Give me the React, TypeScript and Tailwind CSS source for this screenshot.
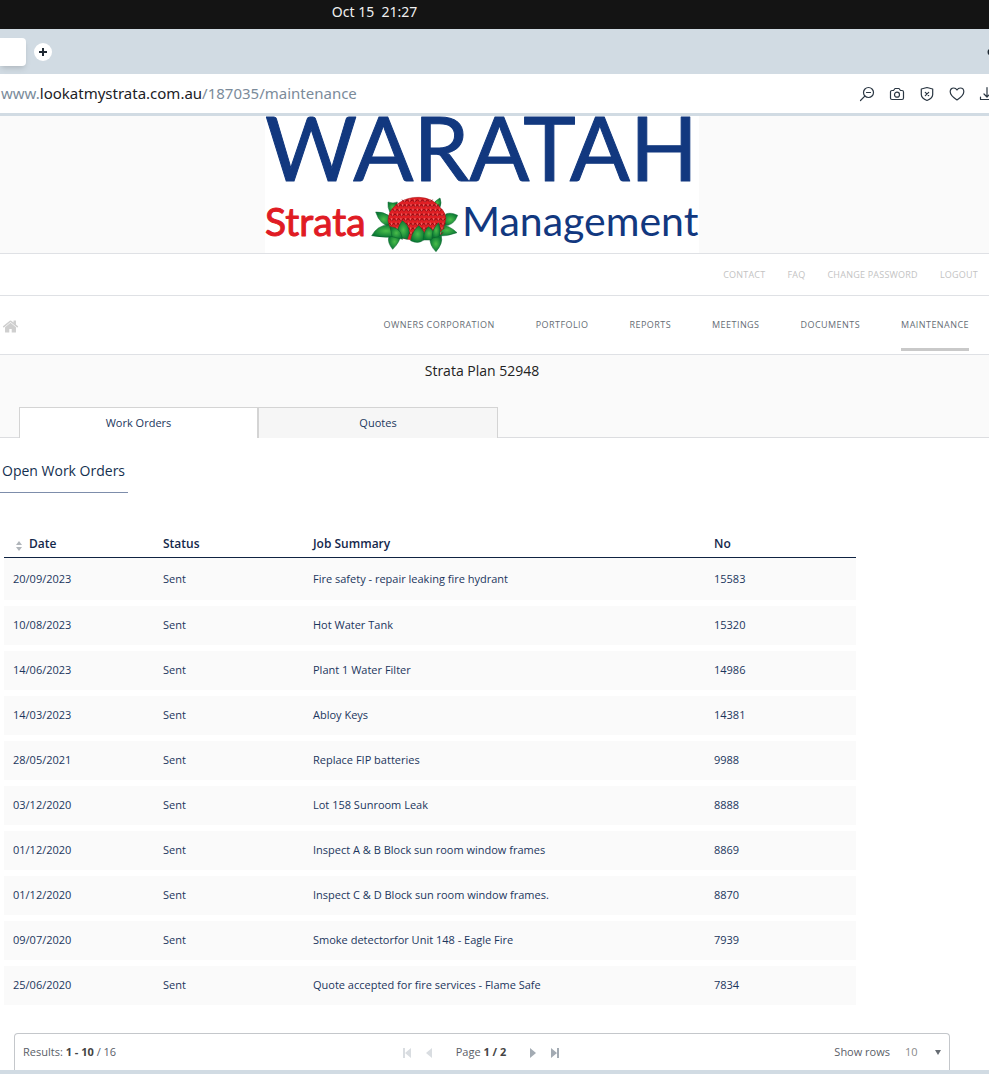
import { useState, type ReactNode } from 'react';

type WorkOrder = {
  date: string;
  status: string;
  summary: string;
  no: string;
};

const WORK_ORDERS: WorkOrder[] = [
  { date: '20/09/2023', status: 'Sent', summary: 'Fire safety - repair leaking fire hydrant', no: '15583' },
  { date: '10/08/2023', status: 'Sent', summary: 'Hot Water Tank', no: '15320' },
  { date: '14/06/2023', status: 'Sent', summary: 'Plant 1 Water Filter', no: '14986' },
  { date: '14/03/2023', status: 'Sent', summary: 'Abloy Keys', no: '14381' },
  { date: '28/05/2021', status: 'Sent', summary: 'Replace FIP batteries', no: '9988' },
  { date: '03/12/2020', status: 'Sent', summary: 'Lot 158 Sunroom Leak', no: '8888' },
  { date: '01/12/2020', status: 'Sent', summary: 'Inspect A & B Block sun room window frames', no: '8869' },
  { date: '01/12/2020', status: 'Sent', summary: 'Inspect C & D Block sun room window frames.', no: '8870' },
  { date: '09/07/2020', status: 'Sent', summary: 'Smoke detectorfor Unit 148 - Eagle Fire', no: '7939' },
  { date: '25/06/2020', status: 'Sent', summary: 'Quote accepted for fire services - Flame Safe', no: '7834' },
];

const ACCOUNT_LINKS = ['CONTACT', 'FAQ', 'CHANGE PASSWORD', 'LOGOUT'];
const MAIN_LINKS = ['OWNERS CORPORATION', 'PORTFOLIO', 'REPORTS', 'MEETINGS', 'DOCUMENTS', 'MAINTENANCE'];
const TABS = ['Work Orders', 'Quotes'];

const LEAVES = [
  'M84 36 Q100 42 112 36 L108 60 L90 68 Q82 52 84 36Z',
  'M240 24 Q246 38 240 52 L220 42 Q228 30 240 24Z',
  'M47 66 Q70 64 88 78 Q100 92 92 110 Q60 106 47 66Z',
  'M293 76 Q272 66 258 72 Q246 88 250 108 Q282 108 293 76Z',
  'M35 137 Q52 106 86 104 Q112 112 122 138 Q80 146 35 137Z',
  'M291 128 Q268 106 242 104 Q228 118 232 138 Q262 140 291 128Z',
  'M98 178 Q82 158 86 142 L122 132 Q122 154 98 178Z',
  'M228 185 Q208 166 210 142 L244 138 Q250 160 228 185Z',
];

const CROWN = [
  'M127 92 Q146 104 148 128 L142 148 L112 140 Q110 112 127 92Z',
  'M90 110 Q112 112 122 128 L128 148 L96 140Z',
  'M176 107 Q196 122 194 148 Q176 164 152 152 Q156 124 176 107Z',
  'M205 110 Q222 120 224 138 L212 150 L190 150 Q190 124 205 110Z',
  'M236 98 Q244 118 238 140 L216 144 Q216 116 236 98Z',
];

// rows of petals that follow the dome of the flower
const PETALS = Array.from({ length: 8 }, (_, row) => {
  const y = 34 + row * 14;
  const half = 84 * Math.sqrt(Math.max(0, 1 - ((y - 98) / 76) ** 2));
  const count = Math.max(4, Math.round(half / 7)) + (row % 2);
  return Array.from({ length: count }, (_, i) => ({
    x: Math.round(172 - half + ((i + 0.5) * 2 * half) / count),
    y,
  }));
}).flat();

function Logo() {
  return (
    <svg viewBox="0 0 434 137" className="w-[434px] h-[137px] bg-white overflow-visible" role="img" aria-label="Waratah Strata Management">
      <defs>
        <radialGradient id="leaf">
          <stop offset="0" stopColor="#4bbd4a" />
          <stop offset="1" stopColor="#0b7a35" />
        </radialGradient>
      </defs>
      <g strokeLinejoin="round" className="font-['Lato',sans-serif]">
        <text x="0" y="65" fontSize="89" fill="#12387f" stroke="#12387f" strokeWidth="1">WARATAH</text>
        <text x="0" y="120" fontSize="39" fill="#e01b24" stroke="#e01b24" strokeWidth="1">Strata</text>
        <text x="197" y="120" fontSize="41" fill="#12387f">Management</text>
      </g>
      <g transform="translate(95 74) scale(0.3333)" stroke="#07602a" strokeWidth="1.5">
        {LEAVES.map(d => <path key={d} d={d} fill="url(#leaf)" />)}
        <path d="M84 92 Q84 62 112 42 Q142 20 178 22 Q218 24 240 52 Q262 72 256 94 Q248 140 200 148 Q150 156 112 138 Q88 118 84 92Z" fill="#e01f24" stroke="#9b1015" />
        {PETALS.map(p => (
          <g key={`${p.x}-${p.y}`} fill="none" strokeLinecap="round">
            <path d={`M${p.x - 7} ${p.y - 4} q7 11 14 0`} stroke="#8d0d14" strokeWidth="3" />
            <path d={`M${p.x} ${p.y - 5} v5`} stroke="#f07878" strokeWidth="2.5" />
          </g>
        ))}
        {CROWN.map(d => <path key={d} d={d} fill="url(#leaf)" />)}
      </g>
    </svg>
  );
}

function ToolButton({ label, children }: { label: string; children: ReactNode }) {
  return (
    <button aria-label={label} className="w-[30px] h-[30px] flex items-center justify-center">
      <svg viewBox="0 0 16 16" className="w-4 h-4" fill="none" stroke="#2b3743" strokeWidth="1.2" strokeLinecap="round" strokeLinejoin="round">
        {children}
      </svg>
    </button>
  );
}

function PagerButton({ label, disabled, children }: { label: string; disabled?: boolean; children: ReactNode }) {
  return (
    <button aria-label={label} disabled={disabled} className="w-[22px] h-5 flex items-center justify-center text-[#a3abb3] disabled:text-[#d9dde1]">
      <svg viewBox="0 0 10 10" className="w-[10px] h-[10px]" fill="currentColor">{children}</svg>
    </button>
  );
}

export default function App() {
  const [tab, setTab] = useState('Work Orders');
  const [rows, setRows] = useState('10');

  return (
    <div className="font-['Open_Sans',sans-serif] bg-white text-[#1b365d] overflow-hidden">
      {/* Desktop bar */}
      <div className="h-[29px] bg-[#141414] text-[#f0f0f0] font-['Noto_Sans',sans-serif] text-sm leading-6 text-center pr-[240px] whitespace-pre">
        Oct 15  21:27
      </div>

      {/* Browser tabs */}
      <div className="h-[45px] bg-[#d1dbe3] flex items-center justify-between">
        <div className="flex items-center gap-2">
          <div className="w-[26px] h-7 bg-white rounded-r shadow-md" />
          <button aria-label="New tab" className="w-[18px] h-[18px] rounded-full bg-white flex items-center justify-center">
            <svg viewBox="0 0 8 8" className="w-2 h-2" stroke="#1f2933" strokeWidth="2"><path d="M4 0v8M0 4h8" /></svg>
          </button>
        </div>
        <svg viewBox="0 0 2 8" className="w-[2px] h-2"><circle cx="4" cy="4" r="3.5" fill="#1f2933" /></svg>
      </div>

      {/* Address bar */}
      <div className="h-[42px] border-b-[3px] border-[#d1dbe3] flex items-center justify-between">
        <div className="font-['Noto_Sans',sans-serif] text-[15px] text-[#7b8b9a] pl-px">
          www.<span className="text-[#1c2126]">lookatmystrata.com.au</span>/187035/maintenance
        </div>
        <div className="flex -mr-[13px]">
          <ToolButton label="Zoom out">
            <circle cx="9.5" cy="6.5" r="5" />
            <path d="M5.8 10.2L1.5 14.5M7.5 6.5h4" />
          </ToolButton>
          <ToolButton label="Snapshot">
            <path d="M1.5 6a1.5 1.5 0 0 1 1.500-1.500H4.500L6 2.500h4l1.500 2H13A1.500 1.500 0 0 1 14.500 6v6a1.500 1.500 0 0 1-1.500 1.500H3A1.500 1.500 0 0 1 1.500 12z" />
            <circle cx="8" cy="8.700" r="2.500" />
          </ToolButton>
          <ToolButton label="Blocker">
            <path d="M8 1.500L13.700 3v5.500c0 2.500-2.500 4.700-5.700 6-3.200-1.300-5.700-3.500-5.700-6V3z" />
            <path d="M6.300 6.300l3.400 3.400M9.700 6.300L6.300 9.700" />
          </ToolButton>
          <ToolButton label="Favourite">
            <path d="M8 14C4 11.300 1.200 8.800 1.200 5.700 1.200 3.600 2.700 2 4.700 2 6.200 2 7.300 2.800 8 4c.7-1.200 1.800-2 3.300-2 2 0 3.500 1.600 3.500 3.700C14.800 8.800 12 11.300 8 14z" />
          </ToolButton>
          <ToolButton label="Downloads">
            <path d="M8 1.500v9M5 8l3 3 3-3M1.500 11v2.500h13V11" />
          </ToolButton>
        </div>
      </div>

      <header>
        <div className="bg-[#fafafa] flex justify-center pr-[25px]">
          <Logo />
        </div>
        <nav aria-label="Account" className="h-[43px] border-y border-[#dfe1e5] flex items-center justify-end gap-[22px] pr-[11px] text-[9px] tracking-wide text-[#c3c3c3]">
          {ACCOUNT_LINKS.map(l => <a key={l} href="#">{l}</a>)}
        </nav>
        <div className="h-[59px] border-b border-[#dfe1e5] flex items-center justify-between pl-[2px] pr-5">
          <a href="#" aria-label="Home" className="pt-[2px]">
            <svg viewBox="0 0 1792 1792" className="w-[17px] h-[17px]" fill="#cfcfcf">
              <path d="M1472 992v480q0 26-19 45t-45 19h-384v-384h-256v384h-384q-26 0-45-19t-19-45v-480q0-1 .5-3t.5-3l575-474 575 474q1 2 1 6zm223-69l-62 74q-8 9-21 11h-3q-13 0-21-7l-692-577-692 577q-12 8-24 7-13-2-21-11l-62-74q-8-10-7-23.500t11-21.500l719-599q32-26 76-26t76 26l244 204v-195q0-14 9-23t23-9h192q14 0 23 9t9 23v408l219 182q10 8 11 21.500t-7 23.500z" />
            </svg>
          </a>
          <nav aria-label="Main" className="flex gap-[41px] h-full text-[9px] tracking-wider text-[#666d75]">
            {MAIN_LINKS.map(l => (
              <a key={l} href="#"
                className={`h-[55px] flex items-center pt-[5px] border-b-[3px] ${l === 'MAINTENANCE' ? 'border-[#c9c9c9]' : 'border-transparent'}`}>
                {l}
              </a>
            ))}
          </nav>
        </div>
      </header>

      <div className="bg-[#fafafa]">
        <h1 className="h-[52px] pt-[6px] pr-[25px] text-center text-sm leading-5 text-[#222]">Strata Plan 52948</h1>
        <div role="tablist" className="flex">
          <div className="w-[19px] border-b border-[#dcdde0]" />
          {TABS.map(t => (
            <button key={t} role="tab" aria-selected={tab === t} onClick={() => setTab(t)}
              className={`h-[31px] border-t border-x border-[#d4d4d4] text-[11px] ${tab === t ? 'w-[239px] bg-white' : 'w-60 bg-[#f6f6f6]'}`}>
              {t}
            </button>
          ))}
          <div className="flex-1 border-b border-[#dcdde0]" />
        </div>
      </div>

      <main>
        <h2 className="w-32 h-[55px] pt-[23px] pl-[2px] text-sm leading-5 whitespace-nowrap border-b border-[#7d8dab] text-[#14304f]">Open Work Orders</h2>

        <div className="pt-[37px] pl-1 pr-[133px]">
          <table className="w-full table-fixed border-separate border-spacing-0 text-left text-[11px]">
            <colgroup>
              <col className="w-[150px]" />
              <col className="w-[150px]" />
              <col />
              <col className="w-[151px]" />
            </colgroup>
            <thead>
              <tr className="h-7 text-xs text-[#14284b]">
                <th className="font-semibold pl-3 border-b border-[#0f2342]">
                  <button className="flex items-center gap-[7px]">
                    <svg viewBox="0 0 6 10" className="w-[6px] h-[10px] mt-1" fill="#b0b5ba"><path d="M3 0L6 4H0zM3 10L0 6h6z" /></svg>
                    Date
                  </button>
                </th>
                <th className="font-semibold pl-[9px] border-b border-[#0f2342]">Status</th>
                <th className="font-semibold pl-[9px] border-b border-[#0f2342]">Job Summary</th>
                <th className="font-semibold pl-[9px] border-b border-[#0f2342]">No</th>
              </tr>
            </thead>
            <tbody>
              {WORK_ORDERS.map(o => (
                <tr key={o.no} className="h-[45px] first:h-12 bg-[#fafafa]">
                  <td className="pl-[9px] border-b-[6px] border-white">{o.date}</td>
                  <td className="pl-[9px] border-b-[6px] border-white">{o.status}</td>
                  <td className="pl-[9px] border-b-[6px] border-white">{o.summary}</td>
                  <td className="pl-[9px] border-b-[6px] border-white">{o.no}</td>
                </tr>
              ))}
            </tbody>
          </table>
        </div>

        {/* Pager */}
        <div className="mt-[22px] ml-[14px] mr-[39px] h-[37px] border border-b-0 border-[#c4c7cb] rounded-t-sm grid grid-cols-3 items-center px-2 pt-px text-[11px] text-[#5a6068]">
          <div>Results: <b className="text-[#444]">1 - 10</b> / 16</div>
          <div className="flex items-center justify-center pr-[2px]">
            <PagerButton label="First page" disabled><path d="M1 0h2v10H1zM9 0v10L3 5z" /></PagerButton>
            <PagerButton label="Previous page" disabled><path d="M8 0v10L2 5z" /></PagerButton>
            <span className="px-4">Page <b className="text-[#444]">1 / 2</b></span>
            <PagerButton label="Next page"><path d="M2 0v10l6-5z" /></PagerButton>
            <PagerButton label="Last page"><path d="M7 0h2v10H7zM1 0v10l6-5z" /></PagerButton>
          </div>
          <div className="flex items-center justify-end">
            <label htmlFor="rows">Show rows</label>
            <select id="rows" value={rows} onChange={e => setRows(e.target.value)} className="appearance-none ml-[15px] w-[30px] text-[#8a8a8a] bg-transparent">
              <option>10</option>
              <option>20</option>
              <option>50</option>
            </select>
            <svg viewBox="0 0 6 5" className="w-[6px] h-[5px]" fill="#666c73"><path d="M0 0h6L3 5z" /></svg>
          </div>
        </div>
      </main>
      <div className="h-1 bg-[#d1dbe3]" />
    </div>
  );
}
